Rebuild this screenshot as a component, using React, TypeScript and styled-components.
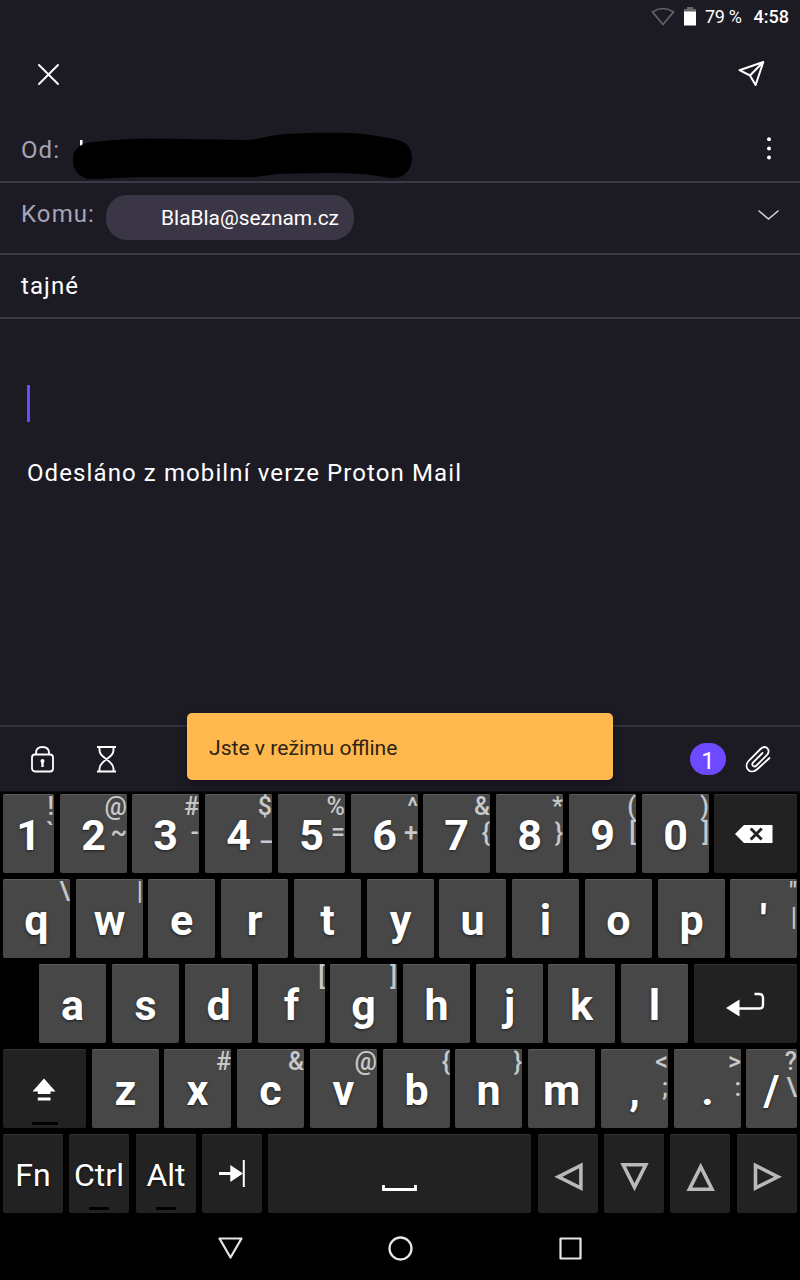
import React from "react";
import styled, { createGlobalStyle } from "styled-components";

const GlobalStyle = createGlobalStyle`
  *, *::before, *::after { box-sizing: border-box; }
  html, body { margin: 0; padding: 0; background: #000; }
  body { font-family: Roboto, "Liberation Sans", sans-serif; color: #fff; overflow: hidden; }
  svg { display: block; flex: none; }
`;

const Screen = styled.div`
  width: 800px;
  height: 1280px;
  display: flex;
  flex-direction: column;
  background: #000;
`;

const StatusBar = styled.header`
  height: 34px;
  display: flex;
  align-items: center;
  justify-content: flex-end;
  padding-right: 11px;
  font-size: 18px;
  line-height: 34px;
`;

const BatteryIcon = styled.svg`
  margin-left: 9px;
`;

const Battery = styled.span`
  margin: 0 12px 0 9px;
  letter-spacing: -0.3px;
`;

const Clock = styled.span`
  font-weight: 500;
`;

const Composer = styled.main`
  height: 792px;
  flex: none;
  display: flex;
  flex-direction: column;
  background: #1c1b24;
  border-bottom: 1px solid #0c0b10;
`;

const AppBar = styled.div`
  height: 81px;
  flex: none;
  display: flex;
  justify-content: space-between;
  padding: 23px 35px 0 34px;
`;

const Field = styled.div<{ $height: number }>`
  height: ${(p) => p.$height}px;
  flex: none;
  display: flex;
  align-items: flex-start;
  padding: 0 21px;
  border-bottom: 2px solid #3b3746;
  font-size: 24px;
  letter-spacing: 1.1px;
  line-height: 32px;
`;

const FieldLabel = styled.span<{ $top: number }>`
  margin-top: ${(p) => p.$top}px;
  color: #a7a4b5;
`;

const Sender = styled.div`
  margin: 12px 0 0 12px;
  width: 342px;
  height: 52px;
`;

const Subject = styled.span`
  margin-top: 15px;
`;

const Chip = styled.div`
  height: 45px;
  width: 248px;
  margin: 12px 0 0 11px;
  padding-left: 55px;
  border-radius: 21px;
  background: #3b3646;
  font-size: 20.9px;
  letter-spacing: 0;
  line-height: 47px;
`;

const FieldAction = styled.div<{ $top: number }>`
  margin: ${(p) => p.$top}px 0 0 auto;
`;

const Message = styled.section`
  flex: 1;
  padding: 66px 27px 0;
  font-size: 24px;
  letter-spacing: 1.1px;
  line-height: 32px;
`;

const Caret = styled.div`
  width: 3px;
  height: 37px;
  background: #6d4aff;
`;

const Signature = styled.p`
  margin: 35px 0 0;
`;

const Toolbar = styled.div`
  position: relative;
  height: 66px;
  flex: none;
  display: flex;
  align-items: center;
  padding: 0 27px 0 30px;
  border-top: 2px solid #33303e;
`;

const ToolGroup = styled.div`
  display: flex;
  align-items: center;
  gap: 40px;
`;

const AttachGroup = styled.div`
  display: flex;
  align-items: center;
  gap: 18px;
  margin-left: auto;
`;

const Badge = styled.span`
  width: 36px;
  height: 32px;
  border-radius: 16px;
  background: #6d4aff;
  text-align: center;
  font-size: 24px;
  line-height: 36px;
`;

const Toast = styled.div`
  position: absolute;
  left: 187px;
  top: -14px;
  width: 426px;
  height: 67px;
  padding-left: 22px;
  border-radius: 5px;
  background: #ffb84d;
  color: #2e2415;
  font-size: 21.1px;
  line-height: 70px;
  box-shadow: 0 4px 8px rgba(0, 0, 0, 0.35);
`;

const Keyboard = styled.div`
  flex: none;
  display: flex;
  flex-direction: column;
  gap: 6px;
  padding: 2px 0 0 3px;
`;

const KeyRow = styled.div<{ $indent?: number }>`
  height: 79px;
  display: flex;
  padding-left: ${(p) => p.$indent || 0}px;
`;

const KeyCap = styled.div<{ $width: number; $gap: number; $dark?: boolean }>`
  position: relative;
  flex: none;
  display: flex;
  justify-content: center;
  width: ${(p) => p.$width}px;
  height: 79px;
  margin-right: ${(p) => p.$gap}px;
  border-radius: 2px;
  overflow: hidden;
  background: ${(p) => (p.$dark ? "#222" : "#474747")};
  box-shadow: inset 0 1px 0 ${(p) => (p.$dark ? "#343434" : "#5c5c5c")};
`;

const KeyLabel = styled.span<{ $small?: boolean }>`
  font-size: ${(p) => (p.$small ? 32 : 43)}px;
  font-weight: ${(p) => (p.$small ? 400 : 700)};
  line-height: 82px;
  white-space: nowrap;
  text-shadow: 0 1px 3px rgba(0, 0, 0, 0.6);
`;

const Hints = styled.div`
  position: absolute;
  top: 0;
  right: 0;
  display: flex;
  flex-direction: column;
  align-items: flex-end;
  gap: 1px;
  color: #c8c8c8;
  font-size: 25px;
  font-weight: 500;
  line-height: 25px;
`;

const LockMark = styled.span<{ $width: number }>`
  position: absolute;
  bottom: 3px;
  left: calc(50% - ${(p) => p.$width / 2}px);
  width: ${(p) => p.$width}px;
  height: 3px;
  border-radius: 1px;
  background: #000;
`;

const KeyIcon = styled.svg`
  width: 60px;
  height: 79px;
`;

const NavBar = styled.nav`
  flex: 1;
  display: flex;
  justify-content: center;
  gap: 142px;
  padding-top: 21px;
`;

type IconName = "back" | "enter" | "shift" | "tab" | "space" | "left" | "down" | "up" | "right";

interface KeySpec {
  label?: string;
  hints?: string[];
  width?: number;
  gap?: number;
  dark?: boolean;
  icon?: IconName;
  lock?: number;
}

const ICONS: Record<IconName, React.ReactNode> = {
  back: (
    <>
      <path d="M9 40 18 31H46.500V49H18Z" fill="#fff" />
      <path d="m24.700 34.500 11 11m0-11-11 11" stroke="#222" strokeWidth="2.9" />
    </>
  ),
  enter: (
    <>
      <path d="M10 44 23.500 35.500V52.500Z" fill="#fff" />
      <path d="M22 44.500H43Q47 44.500 47 41V34Q47 30 43 30H38.500" fill="none" stroke="#fff" strokeWidth="2.400" />
    </>
  ),
  shift: (
    <path d="M29 29.500 40.500 42.500H35.500V45H22.800V42.500H17.500ZM22.800 48.500H35.500V51.500H22.800Z" fill="#fff" />
  ),
  tab: (
    <>
      <path d="M17 38H28.300V31L41 39.500 28.300 48V41H17Z" fill="#fff" />
      <path d="M41.800 26V53" stroke="#fff" strokeWidth="2" />
    </>
  ),
  space: <path d="M13.500 51V55.500H45.500V51" fill="none" stroke="#fff" strokeWidth="2.800" />,
  left: <path d="M20.300 42.800 42.900 31.500V54.100Z" fill="none" stroke="#b9b9b9" strokeWidth="3.600" />,
  down: <path d="M19.200 30.800H41.800L30.500 53.300Z" fill="none" stroke="#b9b9b9" strokeWidth="3.600" />,
  up: <path d="M19.400 55.200H42L30.700 32.700Z" fill="none" stroke="#b9b9b9" strokeWidth="3.600" />,
  right: <path d="M41 42.800 18.500 31.500V54.100Z" fill="none" stroke="#b9b9b9" strokeWidth="3.600" />,
};

const ROWS: { indent?: number; keys: KeySpec[] }[] = [
  {
    keys: [
      { label: "1", hints: ["!", "`"], width: 51 },
      { label: "2", hints: ["@", "~"], gap: 5 },
      { label: "3", hints: ["#", "-"] },
      { label: "4", hints: ["$", "_"] },
      { label: "5", hints: ["%", "="] },
      { label: "6", hints: ["^", "+"], gap: 5 },
      { label: "7", hints: ["&", "{"] },
      { label: "8", hints: ["*", "}"] },
      { label: "9", hints: ["(", "["] },
      { label: "0", hints: [")", "]"], gap: 5 },
      { icon: "back", width: 83, dark: true },
    ],
  },
  {
    keys: [
      { label: "q", hints: ["\\"] },
      { label: "w", hints: ["|"], gap: 5 },
      { label: "e" },
      { label: "r" },
      { label: "t" },
      { label: "y", gap: 5 },
      { label: "u" },
      { label: "i" },
      { label: "o" },
      { label: "p", gap: 5 },
      { label: "'", hints: ['"', "|"] },
    ],
  },
  {
    indent: 36,
    keys: [
      { label: "a" },
      { label: "s" },
      { label: "d" },
      { label: "f", hints: ["["], gap: 5 },
      { label: "g", hints: ["]"] },
      { label: "h" },
      { label: "j", gap: 5 },
      { label: "k" },
      { label: "l" },
      { icon: "enter", width: 103, dark: true },
    ],
  },
  {
    keys: [
      { icon: "shift", width: 83, dark: true, lock: 26 },
      { label: "z", gap: 5 },
      { label: "x", hints: ["#"] },
      { label: "c", hints: ["&"] },
      { label: "v", hints: ["@"] },
      { label: "b", hints: ["{"], gap: 5 },
      { label: "n", hints: ["}"] },
      { label: "m" },
      { label: ",", hints: ["<", ";"] },
      { label: ".", hints: [">", ":"], gap: 5 },
      { label: "/", hints: ["?", "\\"], width: 51 },
    ],
  },
  {
    keys: [
      { label: "Fn", width: 60, dark: true },
      { label: "Ctrl", width: 60, dark: true, gap: 7, lock: 20 },
      { label: "Alt", width: 60, dark: true, lock: 20 },
      { icon: "tab", width: 60, dark: true },
      { icon: "space", width: 263, dark: true, gap: 7 },
      { icon: "left", width: 60, dark: true },
      { icon: "down", width: 60, dark: true },
      { icon: "up", width: 60, dark: true, gap: 7 },
      { icon: "right", width: 60, dark: true },
    ],
  },
];

function Key({ label, hints, width = 67, gap = 6, dark, icon, lock }: KeySpec) {
  return (
    <KeyCap $width={width} $gap={gap} $dark={dark}>
      {label && <KeyLabel $small={dark}>{label}</KeyLabel>}
      {icon && <KeyIcon viewBox="0 0 60 79">{ICONS[icon]}</KeyIcon>}
      {hints && (
        <Hints>
          {hints.map((h) => (
            <span key={h}>{h}</span>
          ))}
        </Hints>
      )}
      {lock && <LockMark $width={lock} />}
    </KeyCap>
  );
}

export default function App() {
  return (
    <Screen>
      <GlobalStyle />
      <Composer>
        <StatusBar>
          <svg width="24" height="20" viewBox="0 0 24 20" fill="none">
            <path d="M1.500 5Q12 -2 22.500 5L12 17.500Z" stroke="#66656b" strokeWidth="1.700" />
          </svg>
          <BatteryIcon width="12" height="20" viewBox="0 0 12 20">
            <path d="M3 0H9V2H12V5H0V2H3Z" fill="#68676d" />
            <path d="M0 4.500H12V18.500H0Z" fill="#fff" />
          </BatteryIcon>
          <Battery>79 %</Battery>
          <Clock>4:58</Clock>
        </StatusBar>

        <AppBar>
          <svg width="30" height="34" viewBox="0 0 30 34">
            <path d="m5 8 19 19M24 8 5 27" stroke="#fff" strokeWidth="1.900" strokeLinecap="round" />
          </svg>
          <svg width="28" height="34" viewBox="0 0 28 34">
            <path
              d="M2.500 13.200 26.300 5 18.600 28 13 18.500ZM13 18.500 26.300 5"
              fill="none"
              stroke="#fff"
              strokeWidth="2"
              strokeLinejoin="round"
            />
          </svg>
        </AppBar>

        <Field $height={68}>
          <FieldLabel $top={19}>Od:</FieldLabel>
          <Sender>
            <svg width="342" height="54" viewBox="0 0 342 54">
              <path d="M8 13H10.500V20H8Z" fill="#fff" />
              <path
                d="M1 35C0 24 6 17 18 15.500C35 13.500 60 11.500 78 11.500L178 13C190 11 202 7.500 215 7C240 6 270 5 290 7C305 9 325 11 333 16C344 23 342 45 328 50C315 53 305 47 286 47C260 45 225 47 204 47C180 51 180 50 160 50L75 50C50 50 35 52 19 52C8 51 2 45 1 35Z"
                fill="#000"
              />
            </svg>
          </Sender>
          <FieldAction $top={20}>
            <svg width="20" height="26" viewBox="0 0 20 26" fill="#fff">
              <circle cx="10" cy="4.200" r="2" />
              <circle cx="10" cy="13.400" r="2" />
              <circle cx="10" cy="22.600" r="2" />
            </svg>
          </FieldAction>
        </Field>

        <Field $height={72}>
          <FieldLabel $top={15}>Komu:</FieldLabel>
          <Chip>BlaBla@seznam.cz</Chip>
          <FieldAction $top={24}>
            <svg width="22" height="16" viewBox="0 0 22 16">
              <path d="m2 4 9.500 8L21 4" fill="none" stroke="#d5d3dc" strokeWidth="1.600" strokeLinecap="round" />
            </svg>
          </FieldAction>
        </Field>

        <Field $height={64}>
          <Subject>tajné</Subject>
        </Field>

        <Message>
          <Caret />
          <Signature>Odesláno z mobilní verze Proton Mail</Signature>
        </Message>

        <Toolbar>
          <ToolGroup>
            <svg width="25" height="28" viewBox="0 0 25 28" fill="none" stroke="#fff" strokeWidth="1.800">
              <rect x="2" y="9.500" width="21" height="17" rx="3" />
              <path d="M6 9.500V8Q6 2 12.500 2Q19 2 19 8V9.500" />
              <circle cx="12.500" cy="16" r="2" fill="#fff" stroke="none" />
              <path d="M12.500 16V22" strokeWidth="2.400" />
            </svg>
            <svg width="23" height="28" viewBox="0 0 23 28" fill="none" stroke="#fff" strokeWidth="1.900">
              <path d="M2 2H21M2 26.500H21M4.500 2V5C4.500 9 7 11 11.500 14.200C16 17.500 18.500 20 18.500 23.500V26.500M18.500 2V5C18.500 9 16 11 11.500 14.200C7 17.500 4.500 20 4.500 23.500V26.500" />
            </svg>
          </ToolGroup>
          <AttachGroup>
            <Badge>1</Badge>
            <svg width="29" height="30" viewBox="0 0 29 30" fill="none" stroke="#fff" strokeWidth="1.800" strokeLinecap="round">
              <path d="M18.500 9 9 18.500C7 21 10 24 12.500 21.500L22.500 11.500C27.500 6 22 0 16.500 5L5 16.500C-1.500 23.500 6.500 31.500 13.500 25L25.500 14" />
            </svg>
          </AttachGroup>
          <Toast>Jste v režimu offline</Toast>
        </Toolbar>
      </Composer>

      <Keyboard>
        {ROWS.map((row, i) => (
          <KeyRow key={i} $indent={row.indent}>
            {row.keys.map((k, j) => (
              <Key key={j} {...k} />
            ))}
          </KeyRow>
        ))}
      </Keyboard>

      <NavBar>
        <svg width="28" height="28" viewBox="0 0 28 28" fill="none" stroke="#e6e6e6" strokeWidth="2.200" strokeLinejoin="round">
          <path d="M3.500 4.500H25.500L14.500 23.500Z" />
        </svg>
        <svg width="28" height="28" viewBox="0 0 28 28" fill="none" stroke="#e6e6e6" strokeWidth="2.300">
          <circle cx="14.500" cy="14.500" r="11" />
        </svg>
        <svg width="28" height="28" viewBox="0 0 28 28" fill="none" stroke="#e6e6e6" strokeWidth="2.200" strokeLinejoin="round">
          <path d="M4.500 4.500H24.500V24.500H4.500Z" />
        </svg>
      </NavBar>
    </Screen>
  );
}
